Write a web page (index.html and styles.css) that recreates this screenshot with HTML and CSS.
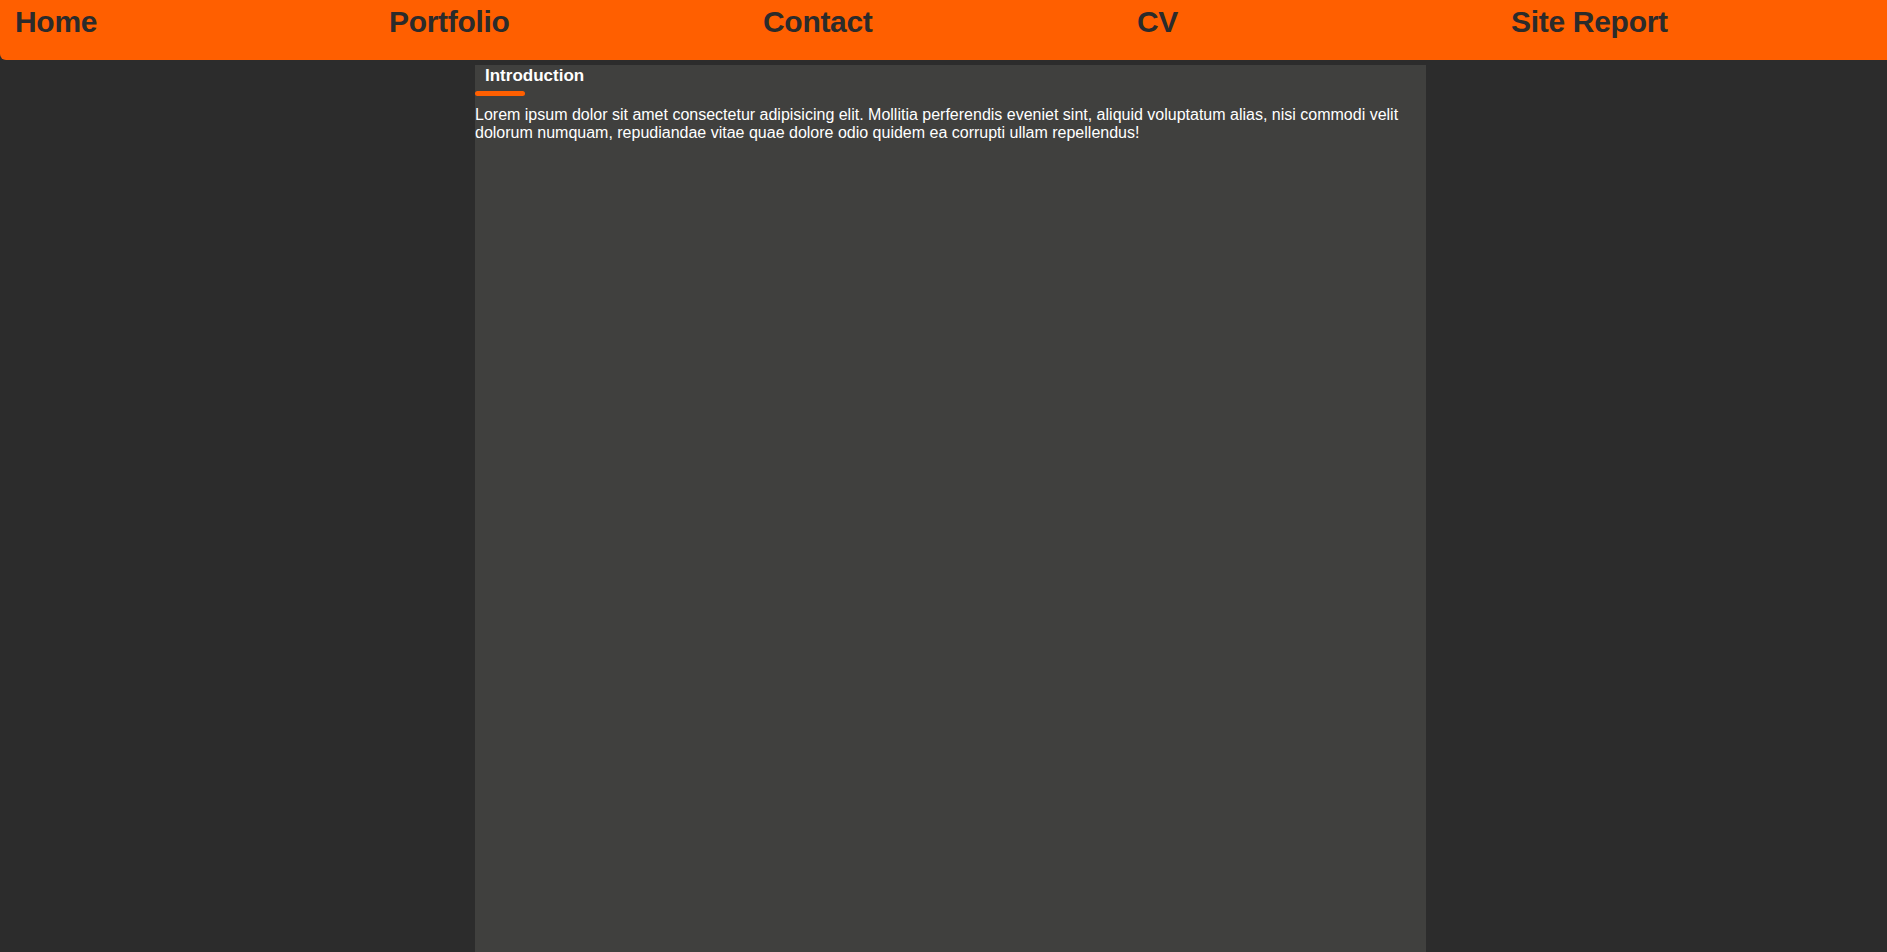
FILE: index.html
```html
<!DOCTYPE html>
<html lang="en">
<head>
<meta charset="utf-8">
<title>Home</title>
<link rel="stylesheet" href="styles.css">
</head>
<body>
<header class="topbar">
  <nav class="nav">
    <a class="nav-item" href="#">Home</a>
    <a class="nav-item" href="#">Portfolio</a>
    <a class="nav-item" href="#">Contact</a>
    <a class="nav-item" href="#">CV</a>
    <a class="nav-item" href="#">Site Report</a>
  </nav>
</header>
<main class="panel">
  <h2 class="section-title">Introduction</h2>
  <div class="section-bar"></div>
  <p class="section-text">Lorem ipsum dolor sit amet consectetur adipisicing elit. Mollitia perferendis eveniet sint, aliquid voluptatum alias, nisi commodi velit dolorum numquam, repudiandae vitae quae dolore odio quidem ea corrupti ullam repellendus!</p>
</main>
</body>
</html>
```

FILE: styles.css
```css
html, body {
  margin: 0;
  padding: 0;
  height: 100%;
}
body {
  background: #2c2c2c;
  font-family: "Liberation Sans", Arial, sans-serif;
  display: flex;
  flex-direction: column;
  overflow: hidden;
}
.topbar {
  background: #ff5f00;
  height: 60px;
  border-bottom-left-radius: 6px;
  flex: none;
}
.nav {
  display: grid;
  grid-template-columns: repeat(5, 374px);
  padding: 5px 0 0 15px;
}
.nav-item {
  color: #2b2b2b;
  font-size: 30px;
  font-weight: bold;
  text-decoration: none;
  line-height: 34px;
  letter-spacing: -0.3px;
}
.panel {
  flex: 1;
  margin: 5px 0 0 475px;
  width: 951px;
  background: #40403e;
}
.section-title {
  margin: 0;
  padding: 1px 10px 0 10px;
  font-size: 17px;
  line-height: 20px;
  color: #ffffff;
  font-weight: bold;
}
.section-bar {
  width: 50px;
  height: 5px;
  margin-top: 5px;
  background: #ff5f00;
  border-radius: 3px;
}
.section-text {
  margin: 10px 0 0 0;
  color: #ffffff;
  font-size: 16px;
  line-height: 17.5px;
}
```
